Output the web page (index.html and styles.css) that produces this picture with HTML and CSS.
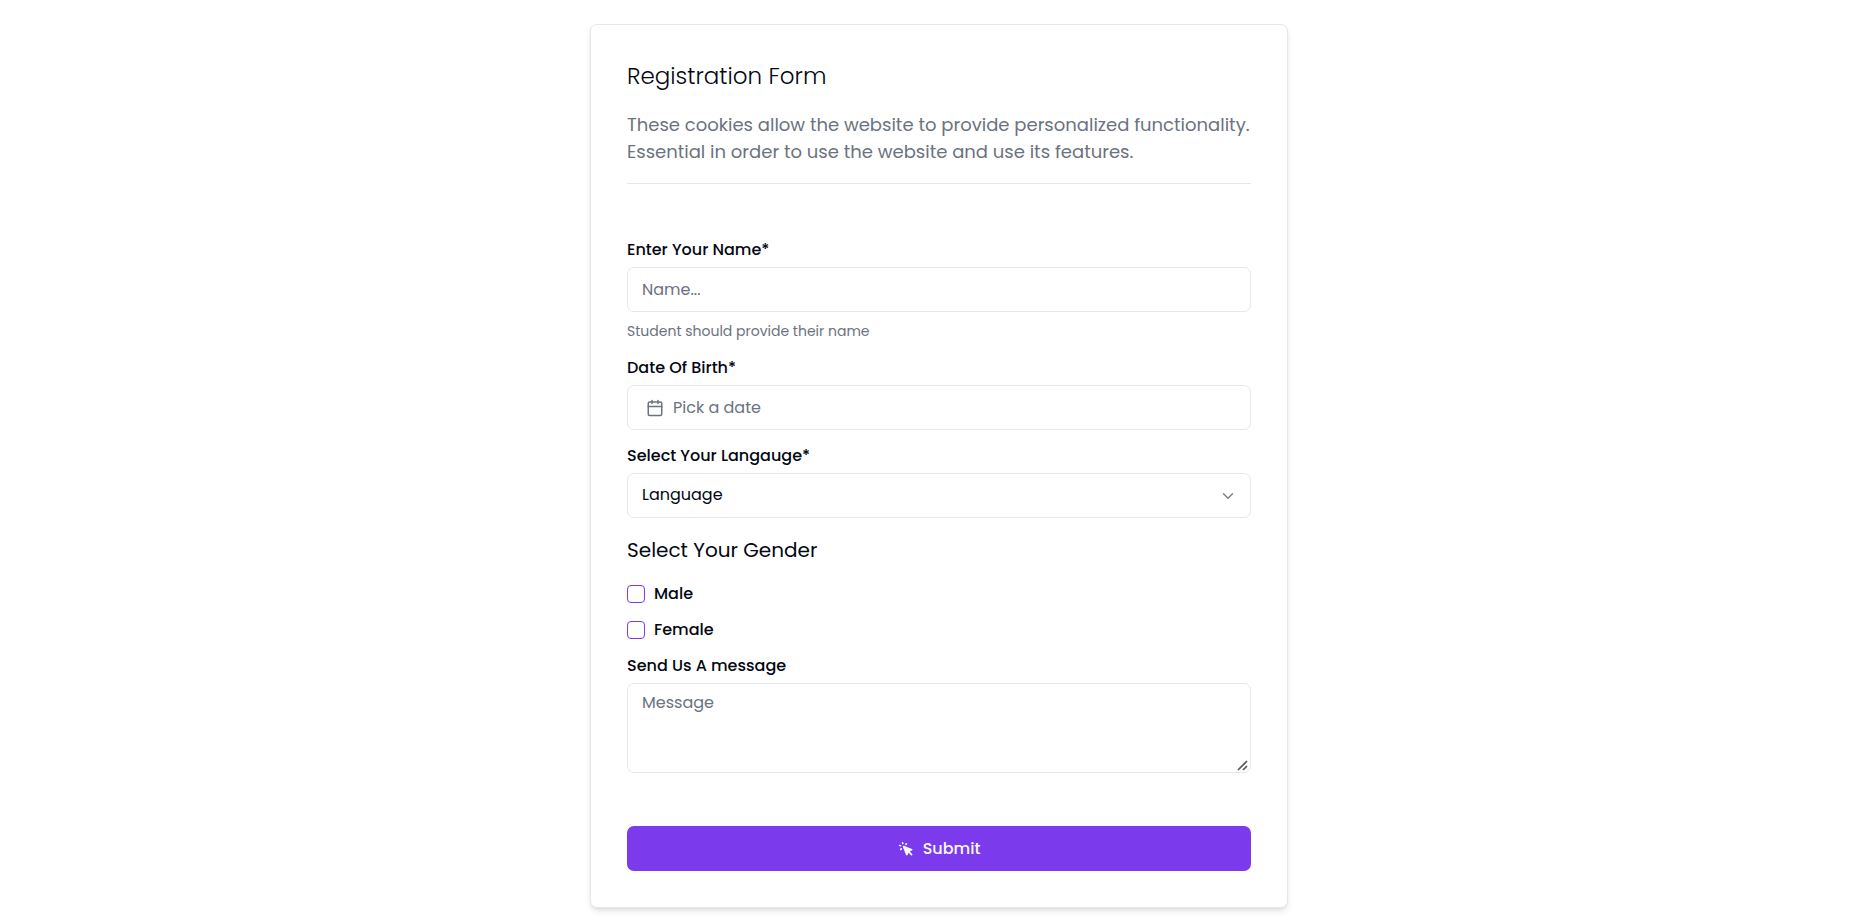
FILE: index.html
```html
<!DOCTYPE html>
<html lang="en">
<head>
<meta charset="utf-8">
<meta name="viewport" content="width=device-width, initial-scale=1">
<title>Registration Form</title>
<link rel="stylesheet" href="styles.css">
</head>
<body>
<main class="card">
  <header class="card-header">
    <h1 class="card-title">Registration Form</h1>
    <p class="card-description">These cookies allow the website to provide personalized functionality. Essential in order to use the website and use its features.</p>
  </header>
  <form class="form">
    <div class="field">
      <label class="label" for="name">Enter Your Name*</label>
      <input class="control" id="name" type="text" placeholder="Name..." aria-describedby="name-help">
      <p class="help" id="name-help">Student should provide their name</p>
    </div>
    <div class="field">
      <label class="label" for="dob">Date Of Birth*</label>
      <button class="control date-button" id="dob" type="button">
        <svg class="icon-calendar" viewBox="0 0 24 24" fill="none" stroke="currentColor" stroke-width="2" stroke-linecap="round" stroke-linejoin="round" aria-hidden="true"><rect x="3" y="4" width="18" height="18" rx="2"/><path d="M16 2v4M8 2v4M3 10h18"/></svg>
        <span>Pick a date</span>
      </button>
    </div>
    <div class="field">
      <label class="label" for="language">Select Your Langauge*</label>
      <div class="select-wrap">
        <select class="control select" id="language"><option>Language</option></select>
        <svg class="icon-chevron" viewBox="0 0 24 24" fill="none" stroke="currentColor" stroke-width="2" stroke-linecap="round" stroke-linejoin="round" aria-hidden="true"><path d="m6 9 6 6 6-6"/></svg>
      </div>
    </div>
    <fieldset class="group">
      <legend class="group-title">Select Your Gender</legend>
      <div class="check-list">
        <label class="check"><input class="check-box" type="checkbox">Male</label>
        <label class="check"><input class="check-box" type="checkbox">Female</label>
      </div>
    </fieldset>
    <div class="field">
      <label class="label" for="message">Send Us A message</label>
      <textarea class="control message" id="message" placeholder="Message"></textarea>
    </div>
    <button class="submit" type="submit">
      <svg class="icon-submit" viewBox="0 0 20 20" fill="currentColor" aria-hidden="true"><path fill-rule="evenodd" d="M6.672 1.911a1 1 0 10-1.932.518l.259.966a1 1 0 001.932-.518l-.26-.966zM2.429 4.74a1 1 0 10-.517 1.932l.966.259a1 1 0 00.517-1.932l-.966-.26zm8.814-.569a1 1 0 00-1.415-1.414l-.707.707a1 1 0 101.415 1.415l.707-.708zm-7.071 7.072l.707-.707A1 1 0 003.465 9.12l-.708.707a1 1 0 001.415 1.415zm3.2-5.171a1 1 0 00-1.3 1.3l4 10a1 1 0 001.823.075l1.38-2.759 3.018 3.02a1 1 0 001.414-1.415l-3.019-3.02 2.76-1.379a1 1 0 00-.076-1.822l-10-4z" clip-rule="evenodd"/></svg>
      <span>Submit</span>
    </button>
  </form>
</main>
</body>
</html>
```

FILE: styles.css
```css
* {
  box-sizing: border-box;
}

body {
  margin: 0;
  padding: 24px 16px 9px 31px;
  background: #fff;
  color: #030712;
  font-family: Poppins, Inter, sans-serif;
  font-size: 16px;
  line-height: 20px;
}

.card {
  max-width: 698px;
  margin: 0 auto;
  padding: 36px;
  border: 1px solid #e5e7eb;
  border-radius: 7px;
  background: #fff;
  box-shadow: 0 4px 7px -1px rgb(0 0 0 / 10%), 0 2px 4px -2px rgb(0 0 0 / 10%);
}

.card-header {
  padding-bottom: 18px;
  border-bottom: 1px solid #e5e7eb;
}

.card-title {
  margin: 0 0 20px;
  font-size: 23px;
  font-weight: 300;
  line-height: 30px;
}

.card-description {
  margin: 0;
  color: #6b7280;
  font-size: 18px;
  line-height: 27px;
}

.form {
  display: flex;
  flex-direction: column;
  gap: 16px;
  padding-top: 56px;
}

.field {
  display: flex;
  flex-direction: column;
  gap: 7px;
}

.label {
  font-weight: 500;
}

.control {
  width: 100%;
  height: 45px;
  padding: 8px 14px;
  border: 1px solid #e5e7eb;
  border-radius: 7px;
  background: #fff;
  color: inherit;
  font: inherit;
}

.control::placeholder {
  color: #6b7280;
  opacity: 1;
}

.help {
  margin: 2px 0 0;
  color: #6b7280;
  font-size: 14px;
  line-height: 21px;
}

.date-button {
  display: flex;
  align-items: center;
  gap: 9px;
  padding: 8px 18px;
  color: #6b7280;
}

.icon-calendar {
  width: 18px;
  height: 18px;
}

.select-wrap {
  display: grid;
  align-items: center;
}

.select {
  grid-area: 1 / 1;
  padding-bottom: 10px;
  appearance: none;
}

.icon-chevron {
  grid-area: 1 / 1;
  justify-self: end;
  width: 18px;
  height: 18px;
  margin-right: 14px;
  color: #808389;
  pointer-events: none;
}

.group {
  margin: 0;
  padding: 0;
  border: 0;
}

.group-title {
  padding: 0;
  font-size: 20px;
  line-height: 32px;
}

.check-list {
  display: flex;
  flex-direction: column;
  gap: 16px;
  padding-top: 18px;
}

.check {
  display: flex;
  align-items: center;
  gap: 9px;
  font-weight: 500;
}

.check-box {
  width: 18px;
  height: 18px;
  margin: 0;
  border: 1px solid #7c3aed;
  border-radius: 4px;
  background: #fff;
  appearance: none;
}

.check-box:checked {
  background: #7c3aed;
}

.message {
  height: 90px;
  padding: 9px 14px;
}

.message::-webkit-resizer {
  background: url("data:image/svg+xml,%3Csvg xmlns='http://www.w3.org/2000/svg' viewBox='0 0 15 15' fill='none' stroke='%23555' stroke-width='1.7'%3E%3Cpath d='M3 13l9-9M8 13l4-4'/%3E%3C/svg%3E") center / contain no-repeat;
}

.submit {
  display: flex;
  align-items: center;
  justify-content: center;
  gap: 9px;
  height: 45px;
  margin-top: 37px;
  border: 0;
  border-radius: 7px;
  background: #7c3aed;
  color: #f9fafb;
  font: inherit;
  font-weight: 500;
}

.icon-submit {
  width: 16px;
  height: 16px;
}
```
